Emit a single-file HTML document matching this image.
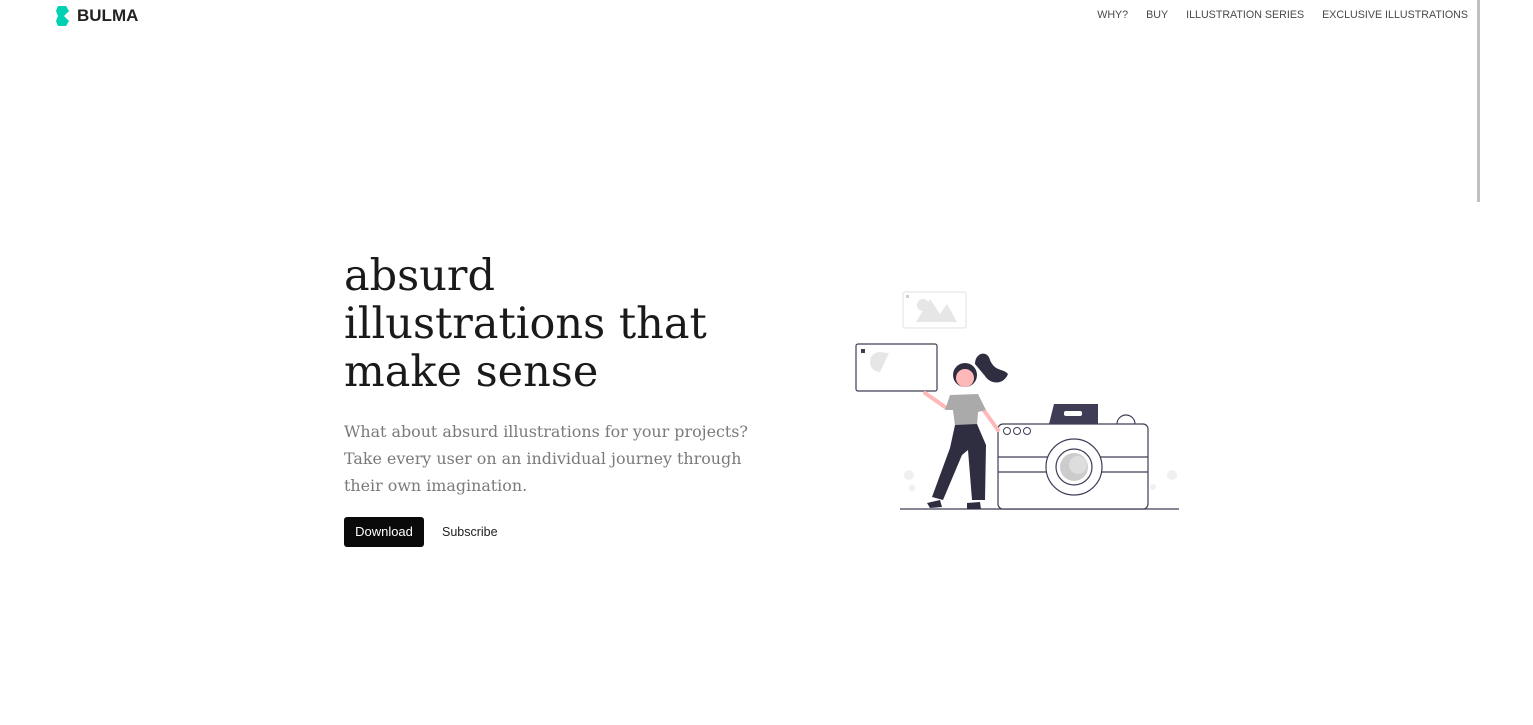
<!DOCTYPE html>
<html><head><meta charset="utf-8"><style>
*{margin:0;padding:0;box-sizing:border-box}
body{width:1533px;height:725px;background:#fff;position:relative;overflow:hidden;font-family:"Liberation Sans",sans-serif}
.logo{position:absolute;left:55px;top:5px;display:flex;align-items:center;gap:6px;font-weight:bold;font-size:17px;color:#222}
.navw{position:absolute;right:65px;top:8px;display:flex;gap:18px;font-size:10.7px;line-height:14px;color:#4a4a4a;white-space:nowrap}
.sb{position:absolute;left:1477px;top:0;width:3px;height:202px;background:#c1c1c1}
h1{position:absolute;left:344px;top:252px;font-family:"DejaVu Serif",serif;font-weight:normal;font-size:43px;line-height:48px;color:#1a1a1a;white-space:nowrap}
p{position:absolute;left:344px;top:418px;font-family:"DejaVu Serif",serif;font-size:15.9px;line-height:27px;color:#7a7a7a;white-space:nowrap}
.btn{position:absolute;left:344px;top:517px;width:80px;height:30px;background:#0a0a0a;color:#fff;font-size:13px;line-height:30px;text-align:center;border-radius:3px}
.sub{position:absolute;left:442px;top:525px;font-size:12.5px;color:#222}
</style></head><body>
<div class="logo"><svg width="16" height="22" viewBox="0 0 16 22"><path d="M3 1 L11 1 L14 6 L9 11 L14 16 L11 21 L3 21 L1 16 L3 11 L1 6 Z" fill="#00d1b2"/></svg>BULMA</div>
<div class="navw"><span>WHY?</span><span>BUY</span><span>ILLUSTRATION SERIES</span><span>EXCLUSIVE ILLUSTRATIONS</span></div>
<div class="sb"></div>
<h1>absurd<br>illustrations that<br>make sense</h1>
<p>What about absurd illustrations for your projects?<br>Take every user on an individual journey through<br>their own imagination.</p>
<div class="btn">Download</div>
<div class="sub">Subscribe</div>
<svg style="position:absolute;left:0;top:0" width="1533" height="725">
<rect x="903" y="292" width="63" height="36" rx="2" fill="none" stroke="#e6e6e6" stroke-width="1.2"/>
<rect x="906" y="295" width="3" height="3" fill="#ccc"/>
<circle cx="923" cy="305" r="6" fill="#e6e6e6"/>
<path d="M916 322 L930 299 L940 314 L947 304 L957 322 Z" fill="#e6e6e6"/>
<rect x="856" y="344" width="81" height="47" rx="2" fill="#fff" stroke="#3f3d56" stroke-width="1.2"/>
<rect x="861" y="349" width="4" height="4" fill="#3f3d56"/>
<path d="M880 352 A9 9 0 1 0 880 372 L889 353 Z" fill="#e6e6e6"/>
<line x1="900" y1="509" x2="1179" y2="509" stroke="#3f3d56" stroke-width="1.2"/>
<circle cx="909" cy="475" r="5" fill="#f0f0f0"/><circle cx="912" cy="488" r="3" fill="#f0f0f0"/>
<circle cx="1172" cy="475" r="5" fill="#f0f0f0"/><circle cx="1153" cy="487" r="3" fill="#f0f0f0"/>
<path d="M1049 424 L1054 404 L1098 404 L1098 424 Z" fill="#3f3d56"/>
<rect x="1064" y="411" width="18" height="5" rx="2" fill="#fff"/>
<path d="M1117 424 A9 9 0 0 1 1135 424" fill="none" stroke="#3f3d56" stroke-width="1.2"/>
<rect x="998" y="424" width="150" height="85" rx="5" fill="#fff" stroke="#3f3d56" stroke-width="1.2"/>
<line x1="998" y1="457" x2="1148" y2="457" stroke="#3f3d56" stroke-width="1.2"/>
<line x1="998" y1="472" x2="1148" y2="472" stroke="#3f3d56" stroke-width="1.2"/>
<circle cx="1074" cy="467" r="28" fill="#fff" stroke="#3f3d56" stroke-width="1.2"/>
<circle cx="1074" cy="467" r="18" fill="#fff" stroke="#3f3d56" stroke-width="1.2"/>
<circle cx="1074" cy="467" r="14" fill="#ccc"/>
<circle cx="1078" cy="465" r="9" fill="#ddd"/>
<circle cx="1007" cy="431" r="3.5" fill="none" stroke="#3f3d56"/><circle cx="1017" cy="431" r="3.5" fill="none" stroke="#3f3d56"/><circle cx="1027" cy="431" r="3.5" fill="none" stroke="#3f3d56"/>
<path d="M975 364 C975 352 988 350 990 360 C995 372 1003 368 1008 374 C1003 386 990 384 985 376" fill="#2f2e41"/>
<circle cx="965" cy="375" r="12" fill="#2f2e41"/>
<circle cx="965" cy="378" r="9" fill="#ffb8b8"/>
<path d="M925 393 L945 407" stroke="#ffb8b8" stroke-width="4" stroke-linecap="round"/>
<path d="M980 405 L998 430" stroke="#ffb8b8" stroke-width="4" stroke-linecap="round"/>
<path d="M950 395 L978 394 L986 410 L978 412 L977 426 L955 426 L953 410 L945 410 Z" fill="#aaa"/>
<path d="M955 425 L977 424 L986 445 L985 500 L972 500 L968 450 L962 455 L943 500 L932 497 L950 448 Z" fill="#2f2e41"/>
<path d="M927 503 L940 500 L942 507 L930 508 Z" fill="#2f2e41"/>
<path d="M967 503 L980 502 L981 509 L967 509 Z" fill="#2f2e41"/>
</svg>
</body></html>
